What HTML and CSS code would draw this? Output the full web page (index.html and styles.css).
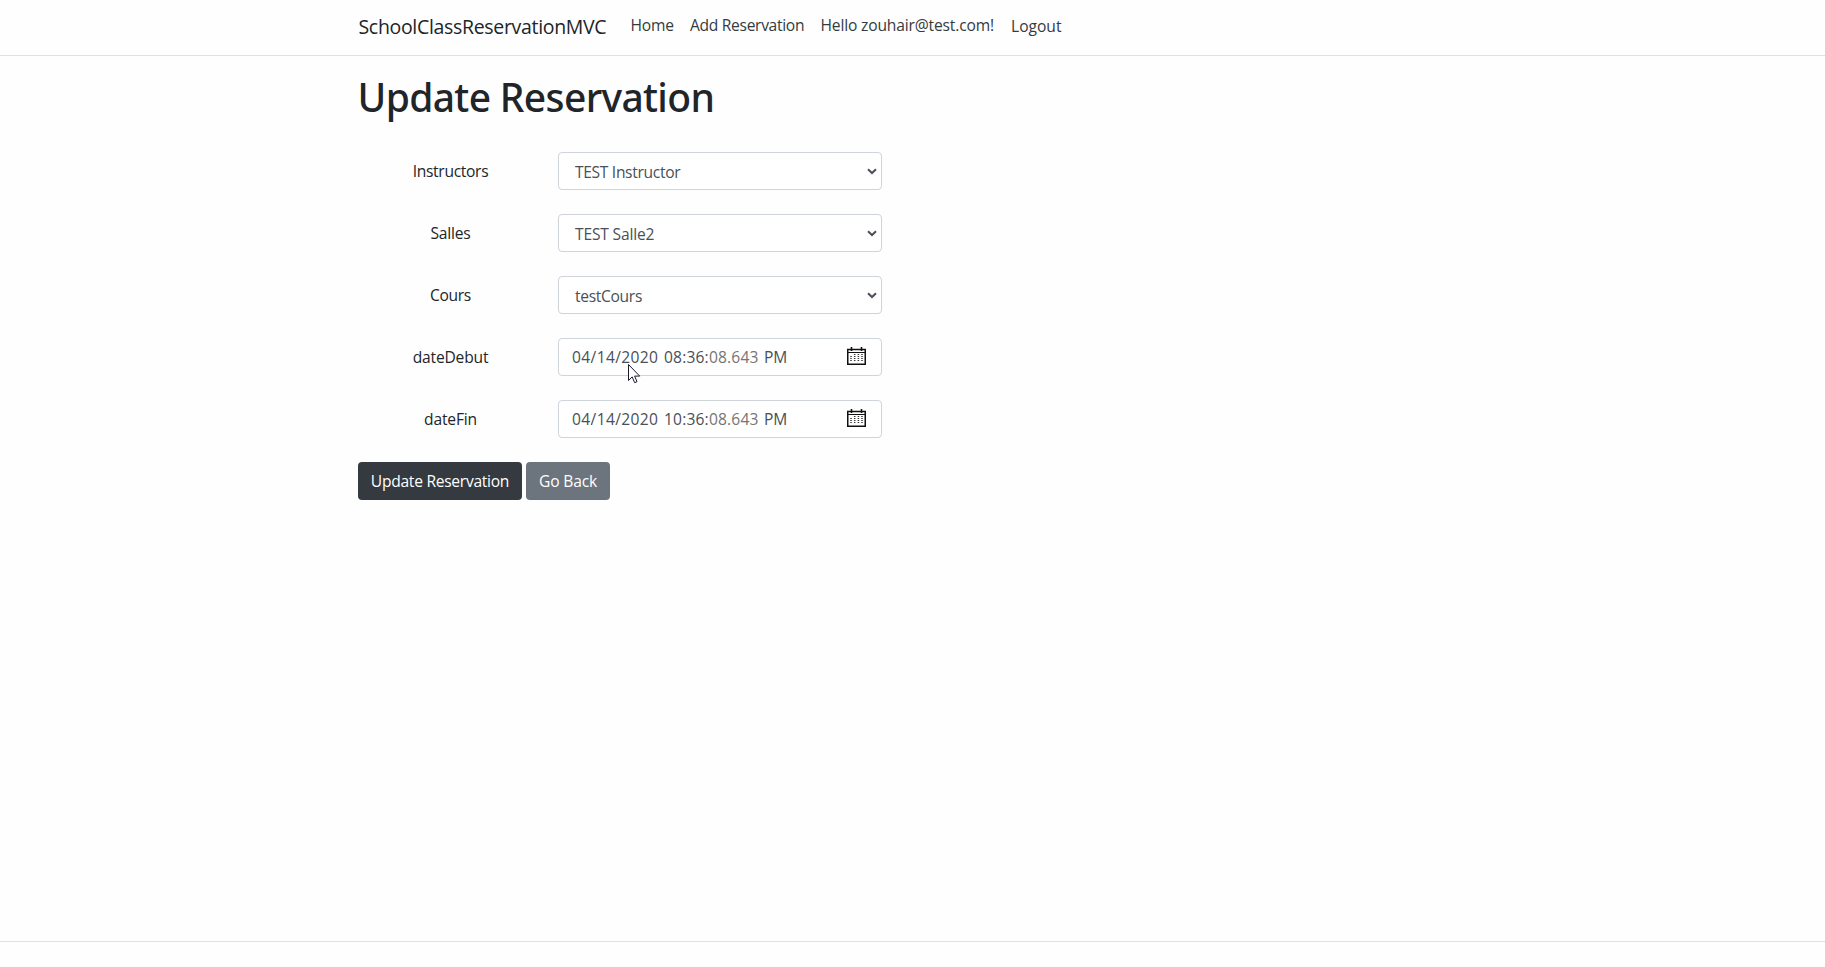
FILE: index.html
```html
<!DOCTYPE html>
<html lang="en">
<head>
<meta charset="utf-8">
<title>Update Reservation - SchoolClassReservationMVC</title>
<link rel="stylesheet" href="styles.css">
</head>
<body>
<svg class="defs" width="0" height="0" aria-hidden="true">
  <symbol id="chevron" viewBox="0 0 10 7"><path d="M1 1.2 5 5 9 1.2" fill="none" stroke="#495057" stroke-width="2"/></symbol>
  <symbol id="calendar" viewBox="0 0 19 18">
    <path d="M.75 2.5h17.5v14.75H.75z" fill="#fff" stroke="#111" stroke-width="1.5"/>
    <path d="M1 5.5h17" stroke="#111"/>
    <path d="M4.5 0v4M14.5 0v4" stroke="#111" stroke-width="1.6"/>
    <path d="M4 9v6" stroke="#333" stroke-width="1.5" stroke-dasharray="1 1"/>
    <path d="M7.7 7v8M11.4 7v8M15 7v8" stroke="#333" stroke-width="1.5" stroke-dasharray="1 1"/>
  </symbol>
</svg>
<header class="navbar">
  <div class="container nav">
    <a class="brand">SchoolClassReservationMVC</a>
    <a class="link home">Home</a>
    <a class="link add">Add Reservation</a>
    <a class="link hello">Hello zouhair@test.com!</a>
    <a class="link logout">Logout</a>
  </div>
</header>
<main class="container main">
  <h1>Update Reservation</h1>
  <form>
    <div class="row"><label class="tight">Instructors</label><div class="control select"><span class="tight">TEST Instructor</span><svg class="chevron"><use href="#chevron"/></svg></div></div>
    <div class="row"><label>Salles</label><div class="control select"><span>TEST Salle2</span><svg class="chevron"><use href="#chevron"/></svg></div></div>
    <div class="row"><label class="tight">Cours</label><div class="control select"><span class="tight">testCours</span><svg class="chevron"><use href="#chevron"/></svg></div></div>
    <div class="row"><label>dateDebut</label><div class="control date"><span class="day">04/14/2020</span><span class="time">08:36:<i>08.643</i></span><span>PM</span><svg class="calendar"><use href="#calendar"/></svg></div></div>
    <div class="row"><label>dateFin</label><div class="control date"><span class="day">04/14/2020</span><span class="time">10:36:<i>08.643</i></span><span>PM</span><svg class="calendar"><use href="#calendar"/></svg></div></div>
    <div class="actions"><button type="button" class="btn dark">Update Reservation</button><button type="button" class="btn gray">Go Back</button></div>
  </form>
</main>
<footer class="footer">
  <div class="container"><span class="year">© 2020 - </span><span class="site">SchoolClassReservation</span>MVC - <a>Privacy</a></div>
</footer>
<svg class="cursor" width="13" height="20" viewBox="0 0 13 20"><path d="M.5.5v16l3.7-3.6 2.5 5.8 2.3-1-2.4-5.6h5.1z" fill="#fff" stroke="#1b1b2b"/></svg>
</body>
</html>
```
FILE: styles.css
```css
* { box-sizing: border-box; }
html { overflow: hidden; }
body {
  margin: 0;
  height: 967px;
  overflow: hidden;
  background: #fefefe;
  color: #212529;
  font: 15.6px/24px "Open Sans", "Noto Sans", sans-serif;
  letter-spacing: -.18px;
}
.defs { position: absolute; }
.container { width: 1140px; margin: 0 auto; padding: 0 15px; }
.navbar { height: 56px; border-bottom: 1px solid #dee2e6; }
.nav { display: flex; align-items: flex-start; padding: 12px 15px 0 16px; white-space: nowrap; }
.brand { width: 248px; margin-right: 24px; font-size: 19.5px; line-height: 30px; letter-spacing: -.32px; }
.link { padding-top: 1px; margin-right: 16px; color: #343a40; }
.home { width: 43.5px; }
.add { width: 114.5px; letter-spacing: -.31px; }
.hello { width: 174.5px; letter-spacing: -.16px; }
.logout { padding-top: 2px; letter-spacing: 0; }
.main { height: 885px; padding-top: 17px; }
h1 { margin: 0 0 31px; font: 500 39px/48px "Noto Sans", sans-serif; letter-spacing: -.65px; }
.row { display: flex; height: 38px; margin-bottom: 24px; align-items: center; }
label { width: 186px; margin-right: 14.5px; text-align: center; }
.tight { letter-spacing: -.32px; }
.control {
  display: flex;
  align-items: center;
  width: 324px;
  height: 38px;
  border: 1px solid #ced4da;
  border-radius: 4px;
  background: #fff;
  color: #495057;
}
.select { justify-content: space-between; padding: 0 4px 0 16px; }
.select span { padding-top: 2px; }
.chevron { width: 10px; height: 7px; }
.date { padding: 0 15px 0 13px; }
.day { width: 92px; letter-spacing: .36px; }
.time { width: 100px; letter-spacing: .17px; }
.time i { font-style: normal; color: #757575; }
.calendar { width: 19px; height: 18px; margin-left: auto; margin-bottom: 2px; }
.actions { display: flex; gap: 4px; }
.btn { height: 38px; padding: 0 0 0 1px; border: 0; border-radius: 4px; color: #fff; font: inherit; }
.dark { width: 164px; background: #343a40; letter-spacing: -.28px; }
.gray { width: 84px; background: #6c757d; letter-spacing: -.17px; }
.footer { height: 26px; overflow: hidden; border-top: 1px solid #dee2e6; font-size: 15.2px; line-height: 60px; color: #6c757d; letter-spacing: .25px; }
.footer .container { white-space: pre; }
.year { letter-spacing: .7px; }
.site { letter-spacing: -.15px; }
.footer a { color: #0366d6; }
.cursor { position: absolute; left: 628px; top: 364px; }
```
